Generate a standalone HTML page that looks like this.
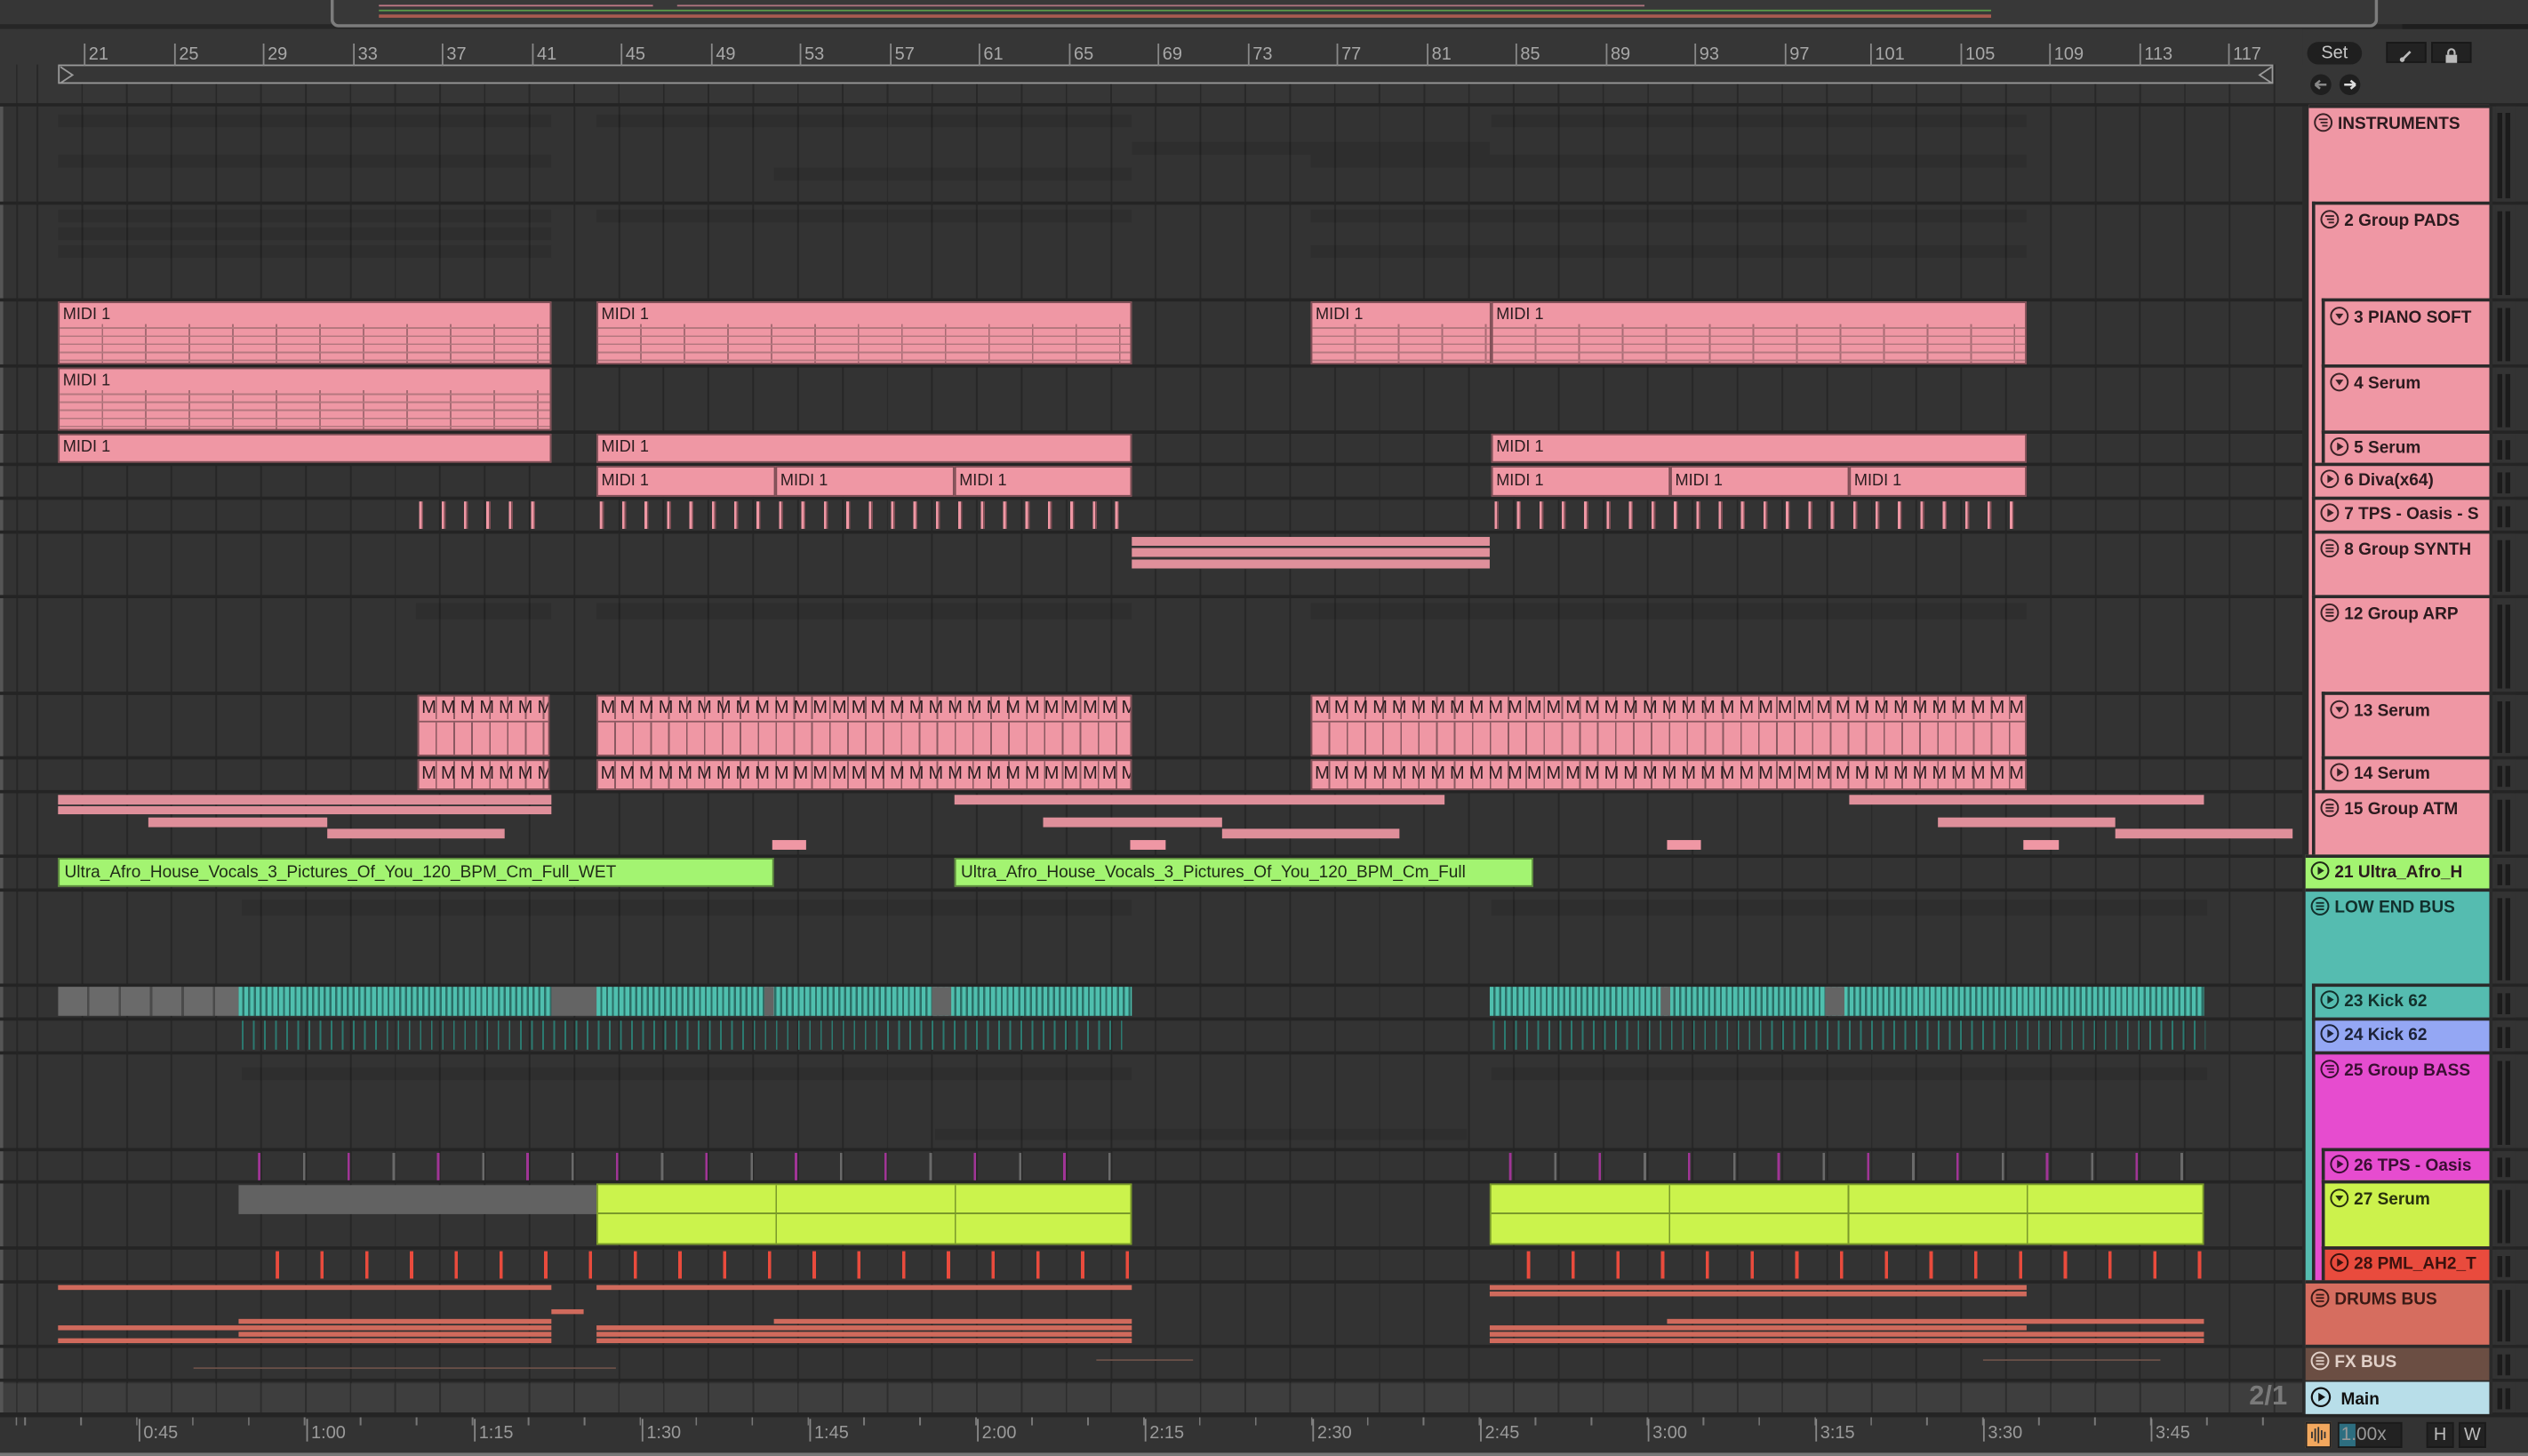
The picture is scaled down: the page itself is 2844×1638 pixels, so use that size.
<!DOCTYPE html>
<html><head><meta charset="utf-8"><style>
html,body{margin:0;padding:0;background:#363636;overflow:hidden;width:2844px;height:1638px}
#s{position:absolute;left:0;top:0;width:1568px;height:903px;transform:scale(1.81378,1.81395);transform-origin:0 0;background:#363636;font-family:"Liberation Sans",sans-serif;overflow:hidden}
.a{position:absolute;box-sizing:border-box}
.sep{position:absolute;left:0;width:1568px;height:2px;background:#242424}
.mc{position:absolute;box-sizing:border-box;background:#ef97a4;border:1px solid #7d4e55;font-size:10px;line-height:12px;color:#2a1c1f;padding-left:2px;overflow:hidden;white-space:nowrap}
.notes{position:absolute;left:0;right:0;top:13px;bottom:0;background:repeating-linear-gradient(180deg,transparent 0 2px,#b5787f 2px 3px,transparent 3px 5px),repeating-linear-gradient(90deg,transparent 0 26px,#a86b74 26px 27px)}
.gh{position:absolute;background:rgba(0,0,0,0.09)}
.h{position:absolute;box-sizing:border-box;border-top:2px solid #2a2a2a;font-weight:bold;font-size:10.5px;color:#2b1a1e;white-space:nowrap;overflow:hidden;padding:3px 0 0 3px;right:24px}
.h.l{border-left:2px solid #2a2a2a}
.h svg{vertical-align:-2px;margin-right:3px}
.m{position:absolute;left:1548px;width:12px;box-sizing:border-box;background:#333}
.m:before,.m:after{content:"";position:absolute;top:4px;bottom:2px;width:3px;background:#1b1b1b}
.m:before{left:1px}.m:after{left:6px}
.rn{position:absolute;top:27px;font-size:11px;color:#a8a8a8;border-left:1px solid #888;padding-left:2px;height:14px;line-height:14px}
.tl{position:absolute;top:880px;font-size:11px;color:#9a9a9a;border-left:1px solid #888;padding-left:2px;height:14px;line-height:18px}
.M{position:absolute;box-sizing:border-box;background:#ef97a4;border:1px solid #7d4e55;overflow:hidden}
.M .t{position:absolute;left:0;right:0;top:0;height:14px;font-size:11px;line-height:14px;color:#2a1c1f;letter-spacing:2.8px;padding-left:1.5px;white-space:nowrap;background:repeating-linear-gradient(90deg,transparent 0 10.1px,#8a5860 10.1px 11.1px)}
.M .b{position:absolute;left:0;right:0;top:15px;bottom:0;border-top:1px solid #8a5860;background:repeating-linear-gradient(90deg,transparent 0 10.1px,#8a5860 10.1px 11.1px)}
</style></head><body><div id="s">

<div class="a" style="left:0;top:0;width:1568px;height:17px;background:#363636"></div>
<div class="a" style="left:0;top:15px;width:1568px;height:3px;background:#262626"></div>
<div class="a" style="left:205px;top:0;width:1270px;height:17px;border:2px solid #7c7c7c;border-top:none;border-radius:0 0 5px 5px;background:#383838"></div>
<div class="a" style="left:235px;top:3px;width:170px;height:1px;background:#c07a86"></div>
<div class="a" style="left:235px;top:6px;width:1000px;height:1px;background:#5a9a4a"></div>
<div class="a" style="left:235px;top:9px;width:1000px;height:2px;background:#a85a50"></div>
<div class="a" style="left:420px;top:3px;width:600px;height:1px;background:#b07580"></div>
<div class="a" style="left:1490px;top:15px;width:78px;height:3px;background:#1e1e1e"></div>

<div class="a" style="left:0;top:18px;width:1428px;height:48px;background:#363636;background-image:repeating-linear-gradient(90deg,#282828 0 1px,transparent 1px 27.75px);background-position:22.7px 0;background-size:100% 100%"></div>
<div class="a" style="left:0;top:18px;width:1428px;height:22px;background:#363636"></div>
<div class="a" style="left:36px;top:40px;width:1374px;height:12px;border:1px solid #9a9a9a;background:#363636"></div>
<svg class="a" style="left:37px;top:41px" width="10" height="11"><path d="M0.5 0.5 L8 5.5 L0.5 10.5" fill="none" stroke="#9a9a9a" stroke-width="1"/></svg>
<svg class="a" style="left:1400px;top:41px" width="10" height="11"><path d="M9 0.5 L1.5 5.5 L9 10.5" fill="none" stroke="#9a9a9a" stroke-width="1"/></svg>
<div class="rn" style="left:52px">21</div><div class="rn" style="left:108px">25</div><div class="rn" style="left:163px">29</div><div class="rn" style="left:219px">33</div><div class="rn" style="left:274px">37</div><div class="rn" style="left:330px">41</div><div class="rn" style="left:385px">45</div><div class="rn" style="left:441px">49</div><div class="rn" style="left:496px">53</div><div class="rn" style="left:552px">57</div><div class="rn" style="left:607px">61</div><div class="rn" style="left:663px">65</div><div class="rn" style="left:718px">69</div><div class="rn" style="left:774px">73</div><div class="rn" style="left:829px">77</div><div class="rn" style="left:885px">81</div><div class="rn" style="left:940px">85</div><div class="rn" style="left:996px">89</div><div class="rn" style="left:1051px">93</div><div class="rn" style="left:1107px">97</div><div class="rn" style="left:1160px">101</div><div class="rn" style="left:1216px">105</div><div class="rn" style="left:1271px">109</div><div class="rn" style="left:1327px">113</div><div class="rn" style="left:1382px">117</div>

<div class="a" style="left:1431px;top:26px;width:34px;height:14px;border-radius:7px;background:#1f1f1f;color:#c8c8c8;font-size:11px;text-align:center;line-height:14px">Set</div>
<div class="a" style="left:1480px;top:26px;width:25px;height:13px;background:#222;border:1px solid #181818"><svg width="23" height="11"><path d="M9 8 L14 3" stroke="#bbb" stroke-width="1.5"/><circle cx="9" cy="8" r="1.5" fill="#bbb"/></svg></div>
<div class="a" style="left:1508px;top:26px;width:25px;height:13px;background:#222;border:1px solid #181818"><svg width="23" height="11"><rect x="8" y="5" width="7" height="5" fill="#bbb"/><path d="M9.5 5 V3.5 a2 2 0 0 1 4 0 V5" fill="none" stroke="#bbb" stroke-width="1.2"/></svg></div>
<div class="a" style="left:1433px;top:46px;width:13px;height:13px;border-radius:50%;background:#1f1f1f"><svg width="13" height="13"><path d="M3 6.5 H10 M3 6.5 L6 4 M3 6.5 L6 9" stroke="#888" stroke-width="1.4" fill="none"/></svg></div>
<div class="a" style="left:1451px;top:46px;width:13px;height:13px;border-radius:50%;background:#1f1f1f"><svg width="13" height="13"><path d="M3 6.5 H10 M10 6.5 L7 4 M10 6.5 L7 9" stroke="#ddd" stroke-width="1.4" fill="none"/></svg></div>

<div class="a" style="left:0;top:66px;width:1428px;height:811px;background:#333;background-image:repeating-linear-gradient(90deg,#262626 0 1px,transparent 1px 27.75px);background-position:22.7px 0"></div>
<div class="a" style="left:0;top:858px;width:1428px;height:19px;background:#3e3e3e;background-image:repeating-linear-gradient(90deg,#2d2d2d 0 1px,transparent 1px 27.75px);background-position:22.7px 0"></div>
<div class="a" style="left:1428px;top:66px;width:140px;height:811px;background:#333"></div>
<div class="a" style="left:0;top:66px;width:2px;height:837px;background:#555"></div>

<div class="gh" style="left:36px;top:71px;width:306px;height:8px"></div>
<div class="gh" style="left:36px;top:96px;width:306px;height:8px"></div>
<div class="gh" style="left:370px;top:71px;width:332px;height:8px"></div>
<div class="gh" style="left:702px;top:88px;width:222px;height:8px"></div>
<div class="gh" style="left:925px;top:71px;width:332px;height:8px"></div>
<div class="gh" style="left:480px;top:104px;width:222px;height:8px"></div>
<div class="gh" style="left:813px;top:96px;width:444px;height:8px"></div>
<div class="gh" style="left:36px;top:130px;width:306px;height:8px"></div>
<div class="gh" style="left:36px;top:141px;width:306px;height:8px"></div>
<div class="gh" style="left:36px;top:152px;width:306px;height:8px"></div>
<div class="gh" style="left:370px;top:130px;width:332px;height:8px"></div>
<div class="gh" style="left:813px;top:130px;width:444px;height:8px"></div>
<div class="gh" style="left:813px;top:152px;width:444px;height:8px"></div>
<div class="gh" style="left:258px;top:374px;width:84px;height:10px"></div>
<div class="gh" style="left:370px;top:374px;width:332px;height:10px"></div>
<div class="gh" style="left:813px;top:374px;width:444px;height:10px"></div>
<div class="gh" style="left:150px;top:558px;width:552px;height:10px"></div>
<div class="gh" style="left:925px;top:558px;width:444px;height:10px"></div>
<div class="gh" style="left:150px;top:662px;width:552px;height:8px"></div>
<div class="gh" style="left:925px;top:662px;width:444px;height:8px"></div>
<div class="gh" style="left:580px;top:700px;width:330px;height:7px"></div>

<div class="sep" style="top:64px"></div><div class="sep" style="top:125px"></div><div class="sep" style="top:185px"></div><div class="sep" style="top:226px"></div><div class="sep" style="top:267px"></div><div class="sep" style="top:287px"></div><div class="sep" style="top:308px"></div><div class="sep" style="top:329px"></div><div class="sep" style="top:369px"></div><div class="sep" style="top:429px"></div><div class="sep" style="top:469px"></div><div class="sep" style="top:490px"></div><div class="sep" style="top:530px"></div><div class="sep" style="top:551px"></div><div class="sep" style="top:610px"></div><div class="sep" style="top:631px"></div><div class="sep" style="top:652px"></div><div class="sep" style="top:712px"></div><div class="sep" style="top:732px"></div><div class="sep" style="top:773px"></div><div class="sep" style="top:794px"></div><div class="sep" style="top:834px"></div><div class="sep" style="top:855px"></div><div class="sep" style="top:876px;height:3px"></div>

<div class="mc" style="left:36px;top:187px;width:306px;height:39px;padding-top:2px">MIDI 1<div class="notes"></div></div>
<div class="mc" style="left:370px;top:187px;width:332px;height:39px;padding-top:2px">MIDI 1<div class="notes"></div></div>
<div class="mc" style="left:813px;top:187px;width:112px;height:39px;padding-top:2px">MIDI 1<div class="notes"></div></div>
<div class="mc" style="left:925px;top:187px;width:332px;height:39px;padding-top:2px">MIDI 1<div class="notes"></div></div>
<div class="mc" style="left:36px;top:228px;width:306px;height:39px;padding-top:2px">MIDI 1<div class="notes"></div></div>
<div class="mc" style="left:36px;top:269px;width:306px;height:18px;line-height:16px">MIDI 1</div>
<div class="mc" style="left:370px;top:269px;width:332px;height:18px;line-height:16px">MIDI 1</div>
<div class="mc" style="left:925px;top:269px;width:332px;height:18px;line-height:16px">MIDI 1</div>
<div class="mc" style="left:370px;top:289px;width:111px;height:19px;line-height:17px">MIDI 1</div>
<div class="mc" style="left:481px;top:289px;width:111px;height:19px;line-height:17px">MIDI 1</div>
<div class="mc" style="left:592px;top:289px;width:110px;height:19px;line-height:17px">MIDI 1</div>
<div class="mc" style="left:925px;top:289px;width:111px;height:19px;line-height:17px">MIDI 1</div>
<div class="mc" style="left:1036px;top:289px;width:111px;height:19px;line-height:17px">MIDI 1</div>
<div class="mc" style="left:1147px;top:289px;width:110px;height:19px;line-height:17px">MIDI 1</div>
<div class="a" style="left:260px;top:311px;width:74px;height:17px;background:repeating-linear-gradient(90deg,#ef97a4 0 1.5px,#7d4e55 1.5px 2.5px,transparent 2.5px 13.9px)"></div>
<div class="a" style="left:372px;top:311px;width:322px;height:17px;background:repeating-linear-gradient(90deg,#ef97a4 0 1.5px,#7d4e55 1.5px 2.5px,transparent 2.5px 13.9px)"></div>
<div class="a" style="left:927px;top:311px;width:322px;height:17px;background:repeating-linear-gradient(90deg,#ef97a4 0 1.5px,#7d4e55 1.5px 2.5px,transparent 2.5px 13.9px)"></div>
<div class="a" style="left:702px;top:333px;width:222px;height:20px;background:repeating-linear-gradient(180deg,#e0909b 0 5.5px,#333 5.5px 7px)"></div>

<div class="M" style="left:259px;top:431px;width:82px;height:38px"><div class="t">MMMMMMMM</div><div class="b"></div></div>
<div class="M" style="left:370px;top:431px;width:332px;height:38px"><div class="t">MMMMMMMMMMMMMMMMMMMMMMMMMMMMMM</div><div class="b"></div></div>
<div class="M" style="left:813px;top:431px;width:444px;height:38px"><div class="t">MMMMMMMMMMMMMMMMMMMMMMMMMMMMMMMMMMMMMMMM</div><div class="b"></div></div>
<div class="M" style="left:259px;top:471px;width:82px;height:19px"><div class="t" style="height:17px;line-height:17px">MMMMMMMM</div></div>
<div class="M" style="left:370px;top:471px;width:332px;height:19px"><div class="t" style="height:17px;line-height:17px">MMMMMMMMMMMMMMMMMMMMMMMMMMMMMM</div></div>
<div class="M" style="left:813px;top:471px;width:444px;height:19px"><div class="t" style="height:17px;line-height:17px">MMMMMMMMMMMMMMMMMMMMMMMMMMMMMMMMMMMMMMMM</div></div>

<div class="a" style="left:36px;top:493px;width:306px;height:6px;background:#df8f9a"></div>
<div class="a" style="left:36px;top:500px;width:306px;height:5px;background:#df8f9a"></div>
<div class="a" style="left:592px;top:493px;width:304px;height:6px;background:#df8f9a"></div>
<div class="a" style="left:1147px;top:493px;width:220px;height:6px;background:#df8f9a"></div>
<div class="a" style="left:92px;top:507px;width:111px;height:6px;background:#df8f9a"></div>
<div class="a" style="left:647px;top:507px;width:111px;height:6px;background:#df8f9a"></div>
<div class="a" style="left:1202px;top:507px;width:110px;height:6px;background:#df8f9a"></div>
<div class="a" style="left:203px;top:514px;width:110px;height:6px;background:#df8f9a"></div>
<div class="a" style="left:758px;top:514px;width:110px;height:6px;background:#df8f9a"></div>
<div class="a" style="left:1312px;top:514px;width:110px;height:6px;background:#df8f9a"></div>
<div class="a" style="left:479px;top:521px;width:21px;height:6px;background:#ef97a4"></div>
<div class="a" style="left:701px;top:521px;width:22px;height:6px;background:#ef97a4"></div>
<div class="a" style="left:1034px;top:521px;width:21px;height:6px;background:#ef97a4"></div>
<div class="a" style="left:1255px;top:521px;width:22px;height:6px;background:#ef97a4"></div>

<div class="a" style="left:36px;top:532px;width:444px;height:18px;background:#a3f471;border:1px solid #5d8a3e;font-size:10.5px;line-height:16px;padding-left:3px;color:#1f2a17;white-space:nowrap;overflow:hidden">Ultra_Afro_House_Vocals_3_Pictures_Of_You_120_BPM_Cm_Full_WET</div>
<div class="a" style="left:592px;top:532px;width:359px;height:18px;background:#a3f471;border:1px solid #5d8a3e;font-size:10.5px;line-height:16px;padding-left:3px;color:#1f2a17;white-space:nowrap;overflow:hidden">Ultra_Afro_House_Vocals_3_Pictures_Of_You_120_BPM_Cm_Full</div>

<div class="a" style="left:36px;top:612px;width:112px;height:18px;background:repeating-linear-gradient(90deg,#6a6a6a 0 18px,#4a4a4a 18px 19.5px)"></div>
<div class="a" style="left:148px;top:612px;width:194px;height:18px;background:repeating-linear-gradient(90deg,#4fbfae 0 2.3px,#2c6e66 2.3px 3.6px)"></div>
<div class="a" style="left:342px;top:612px;width:28px;height:18px;background:#646464"></div>
<div class="a" style="left:370px;top:612px;width:332px;height:18px;background:repeating-linear-gradient(90deg,#4fbfae 0 2.3px,#2c6e66 2.3px 3.6px)"></div>
<div class="a" style="left:474px;top:612px;width:6px;height:18px;background:#646464"></div>
<div class="a" style="left:578px;top:612px;width:12px;height:18px;background:#646464"></div>
<div class="a" style="left:924px;top:612px;width:443px;height:18px;background:repeating-linear-gradient(90deg,#4fbfae 0 2.3px,#2c6e66 2.3px 3.6px)"></div>
<div class="a" style="left:1030px;top:612px;width:6px;height:18px;background:#646464"></div>
<div class="a" style="left:1132px;top:612px;width:12px;height:18px;background:#646464"></div>
<div class="a" style="left:150px;top:633px;width:552px;height:18px;background:repeating-linear-gradient(90deg,#2c7a70 0 1px,transparent 1px 6.9px)"></div>
<div class="a" style="left:926px;top:633px;width:442px;height:18px;background:repeating-linear-gradient(90deg,#2c7a70 0 1px,transparent 1px 6.9px)"></div>
<div class="a" style="left:160px;top:715px;width:542px;height:17px;background:repeating-linear-gradient(90deg,#a03596 0 1.5px,transparent 1.5px 55.5px)"></div>
<div class="a" style="left:936px;top:715px;width:420px;height:17px;background:repeating-linear-gradient(90deg,#a03596 0 1.5px,transparent 1.5px 55.5px)"></div>
<div class="a" style="left:187.7px;top:715px;width:514px;height:17px;background:repeating-linear-gradient(90deg,#6a6a6a 0 1.5px,transparent 1.5px 55.5px)"></div>
<div class="a" style="left:963.7px;top:715px;width:400px;height:17px;background:repeating-linear-gradient(90deg,#6a6a6a 0 1.5px,transparent 1.5px 55.5px)"></div>
<div class="a" style="left:148px;top:735px;width:222px;height:18px;background:#626262"></div>
<div class="a" style="left:370px;top:734px;width:332px;height:38px;background:#cbf34c;border:1px solid #7a9a2a;background-image:linear-gradient(180deg,transparent 0 17px,#7a9a2a 17px 18px,transparent 18px),repeating-linear-gradient(90deg,transparent 0 110px,#7a9a2a 110px 111px)"></div>
<div class="a" style="left:924px;top:734px;width:443px;height:38px;background:#cbf34c;border:1px solid #7a9a2a;background-image:linear-gradient(180deg,transparent 0 17px,#7a9a2a 17px 18px,transparent 18px),repeating-linear-gradient(90deg,transparent 0 110px,#7a9a2a 110px 111px)"></div>
<div class="a" style="left:171px;top:776px;width:532px;height:17px;background:repeating-linear-gradient(90deg,#e94b3d 0 2px,transparent 2px 27.75px)"></div>
<div class="a" style="left:947px;top:776px;width:420px;height:17px;background:repeating-linear-gradient(90deg,#e94b3d 0 2px,transparent 2px 27.75px)"></div>
<div class="a" style="left:36px;top:797px;width:306px;height:3px;background:#d06a5c"></div>
<div class="a" style="left:370px;top:797px;width:332px;height:3px;background:#d06a5c"></div>
<div class="a" style="left:924px;top:797px;width:333px;height:3px;background:#d06a5c"></div>
<div class="a" style="left:924px;top:801px;width:333px;height:3px;background:#d06a5c"></div>
<div class="a" style="left:148px;top:818px;width:194px;height:3px;background:#d06a5c"></div>
<div class="a" style="left:480px;top:818px;width:222px;height:3px;background:#d06a5c"></div>
<div class="a" style="left:1034px;top:818px;width:333px;height:3px;background:#d06a5c"></div>
<div class="a" style="left:36px;top:822px;width:306px;height:3px;background:#d06a5c"></div>
<div class="a" style="left:370px;top:822px;width:332px;height:3px;background:#d06a5c"></div>
<div class="a" style="left:924px;top:822px;width:333px;height:3px;background:#d06a5c"></div>
<div class="a" style="left:148px;top:826px;width:194px;height:3px;background:#d06a5c"></div>
<div class="a" style="left:370px;top:826px;width:332px;height:3px;background:#d06a5c"></div>
<div class="a" style="left:924px;top:826px;width:443px;height:3px;background:#d06a5c"></div>
<div class="a" style="left:36px;top:830px;width:306px;height:3px;background:#d06a5c"></div>
<div class="a" style="left:370px;top:830px;width:332px;height:3px;background:#d06a5c"></div>
<div class="a" style="left:924px;top:830px;width:443px;height:3px;background:#d06a5c"></div>
<div class="a" style="left:342px;top:812px;width:20px;height:3px;background:#d06a5c"></div>
<div class="a" style="left:120px;top:848px;width:262px;height:1px;background:#6a5048"></div>
<div class="a" style="left:680px;top:843px;width:60px;height:1px;background:#6a5048"></div>
<div class="a" style="left:1230px;top:843px;width:110px;height:1px;background:#6a5048"></div>
<div class="a" style="left:1395px;top:856px;font-size:17px;font-weight:bold;color:#7a7a7a;line-height:20px">2/1</div>

<div class="a" style="left:1428px;top:66px;width:118px;height:811px;background:#2a2a2a"></div>
<div class="h" style="left:1432px;top:65px;height:467px;right:24px;background:#ef97a4;width:112px"><svg width="12" height="12"><circle cx="6" cy="6" r="5.2" fill="none" stroke="#3a2226" stroke-width="1.1"/><path d="M3.3 4 H8.7 M4.3 6 H8.7 M5.3 8 H8.7" stroke="#3a2226" stroke-width="1"/></svg>INSTRUMENTS</div>
<div class="h l" style="left:1434px;top:125px;height:164px;width:110px;background:#ef97a4"><svg width="12" height="12"><circle cx="6" cy="6" r="5.2" fill="none" stroke="#3a2226" stroke-width="1.1"/><path d="M3.3 4 H8.7 M4.3 6 H8.7 M5.3 8 H8.7" stroke="#3a2226" stroke-width="1"/></svg>2 Group PADS</div>
<div class="h l" style="left:1440px;top:185px;height:42px;width:104px;background:#ef97a4"><svg width="12" height="12"><circle cx="6" cy="6" r="5.2" fill="none" stroke="#3a2226" stroke-width="1.1"/><path d="M3.5 4.5 H8.5 L6 8 Z" fill="#3a2226"/></svg>3 PIANO SOFT</div>
<div class="h l" style="left:1440px;top:226px;height:42px;width:104px;background:#ef97a4"><svg width="12" height="12"><circle cx="6" cy="6" r="5.2" fill="none" stroke="#3a2226" stroke-width="1.1"/><path d="M3.5 4.5 H8.5 L6 8 Z" fill="#3a2226"/></svg>4 Serum</div>
<div class="h l" style="left:1440px;top:267px;height:22px;width:104px;background:#ef97a4;padding-top:2px"><svg width="12" height="12"><circle cx="6" cy="6" r="5.2" fill="none" stroke="#3a2226" stroke-width="1.1"/><path d="M4.6 3.4 L8.6 6 L4.6 8.6 Z" fill="#3a2226"/></svg>5 Serum</div>
<div class="h l" style="left:1434px;top:287px;height:22px;width:110px;background:#ef97a4;padding-top:2px"><svg width="12" height="12"><circle cx="6" cy="6" r="5.2" fill="none" stroke="#3a2226" stroke-width="1.1"/><path d="M4.6 3.4 L8.6 6 L4.6 8.6 Z" fill="#3a2226"/></svg>6 Diva(x64)</div>
<div class="h l" style="left:1434px;top:308px;height:22px;width:110px;background:#ef97a4;padding-top:2px"><svg width="12" height="12"><circle cx="6" cy="6" r="5.2" fill="none" stroke="#3a2226" stroke-width="1.1"/><path d="M4.6 3.4 L8.6 6 L4.6 8.6 Z" fill="#3a2226"/></svg>7 TPS - Oasis - S</div>
<div class="h l" style="left:1434px;top:329px;height:41px;width:110px;background:#ef97a4"><svg width="12" height="12"><circle cx="6" cy="6" r="5.2" fill="none" stroke="#3a2226" stroke-width="1.1"/><path d="M3.5 4 H8.5 M3.5 6 H8.5 M3.5 8 H8.5" stroke="#3a2226" stroke-width="1"/></svg>8 Group SYNTH</div>
<div class="h l" style="left:1434px;top:369px;height:122px;width:110px;background:#ef97a4"><svg width="12" height="12"><circle cx="6" cy="6" r="5.2" fill="none" stroke="#3a2226" stroke-width="1.1"/><path d="M3.5 4 H8.5 M3.5 6 H8.5 M3.5 8 H8.5" stroke="#3a2226" stroke-width="1"/></svg>12 Group ARP</div>
<div class="h l" style="left:1440px;top:429px;height:41px;width:104px;background:#ef97a4"><svg width="12" height="12"><circle cx="6" cy="6" r="5.2" fill="none" stroke="#3a2226" stroke-width="1.1"/><path d="M3.5 4.5 H8.5 L6 8 Z" fill="#3a2226"/></svg>13 Serum</div>
<div class="h l" style="left:1440px;top:469px;height:22px;width:104px;background:#ef97a4;padding-top:2px"><svg width="12" height="12"><circle cx="6" cy="6" r="5.2" fill="none" stroke="#3a2226" stroke-width="1.1"/><path d="M4.6 3.4 L8.6 6 L4.6 8.6 Z" fill="#3a2226"/></svg>14 Serum</div>
<div class="h l" style="left:1434px;top:490px;height:41px;width:110px;background:#ef97a4"><svg width="12" height="12"><circle cx="6" cy="6" r="5.2" fill="none" stroke="#3a2226" stroke-width="1.1"/><path d="M3.5 4 H8.5 M3.5 6 H8.5 M3.5 8 H8.5" stroke="#3a2226" stroke-width="1"/></svg>15 Group ATM</div>
<div class="h" style="left:1430px;top:530px;height:22px;width:114px;background:#a3f471;padding-top:2px"><svg width="12" height="12"><circle cx="6" cy="6" r="5.2" fill="none" stroke="#1f2a17" stroke-width="1.1"/><path d="M4.6 3.4 L8.6 6 L4.6 8.6 Z" fill="#1f2a17"/></svg>21 Ultra_Afro_H</div>
<div class="h" style="left:1430px;top:551px;height:244px;width:114px;background:#55bcb0;color:#12302c"><svg width="12" height="12"><circle cx="6" cy="6" r="5.2" fill="none" stroke="#12302c" stroke-width="1.1"/><path d="M3.5 4 H8.5 M3.5 6 H8.5 M3.5 8 H8.5" stroke="#12302c" stroke-width="1"/></svg>LOW END BUS</div>
<div class="h l" style="left:1434px;top:610px;height:22px;width:110px;background:#55bcb0;color:#12302c;padding-top:2px"><svg width="12" height="12"><circle cx="6" cy="6" r="5.2" fill="none" stroke="#12302c" stroke-width="1.1"/><path d="M4.6 3.4 L8.6 6 L4.6 8.6 Z" fill="#12302c"/></svg>23 Kick 62</div>
<div class="h l" style="left:1434px;top:631px;height:22px;width:110px;background:#94a7f4;color:#1c2238;padding-top:2px"><svg width="12" height="12"><circle cx="6" cy="6" r="5.2" fill="none" stroke="#1c2238" stroke-width="1.1"/><path d="M4.6 3.4 L8.6 6 L4.6 8.6 Z" fill="#1c2238"/></svg>24 Kick 62</div>
<div class="h l" style="left:1434px;top:652px;height:143px;width:110px;background:#e64ccf;color:#3a0f33"><svg width="12" height="12"><circle cx="6" cy="6" r="5.2" fill="none" stroke="#3a0f33" stroke-width="1.1"/><path d="M3.3 4 H8.7 M4.3 6 H8.7 M5.3 8 H8.7" stroke="#3a0f33" stroke-width="1"/></svg>25 Group BASS</div>
<div class="h l" style="left:1440px;top:712px;height:21px;width:104px;background:#e64ccf;color:#3a0f33;padding-top:2px"><svg width="12" height="12"><circle cx="6" cy="6" r="5.2" fill="none" stroke="#3a0f33" stroke-width="1.1"/><path d="M4.6 3.4 L8.6 6 L4.6 8.6 Z" fill="#3a0f33"/></svg>26 TPS - Oasis</div>
<div class="h l" style="left:1440px;top:732px;height:42px;width:104px;background:#ccf24c;color:#28300e"><svg width="12" height="12"><circle cx="6" cy="6" r="5.2" fill="none" stroke="#28300e" stroke-width="1.1"/><path d="M3.5 4.5 H8.5 L6 8 Z" fill="#28300e"/></svg>27 Serum</div>
<div class="h l" style="left:1440px;top:773px;height:22px;width:104px;background:#e94b3d;color:#3a120e;padding-top:2px"><svg width="12" height="12"><circle cx="6" cy="6" r="5.2" fill="none" stroke="#3a120e" stroke-width="1.1"/><path d="M4.6 3.4 L8.6 6 L4.6 8.6 Z" fill="#3a120e"/></svg>28 PML_AH2_T</div>
<div class="h" style="left:1430px;top:794px;height:41px;width:114px;background:#d66d5f;color:#3a1a15"><svg width="12" height="12"><circle cx="6" cy="6" r="5.2" fill="none" stroke="#3a1a15" stroke-width="1.1"/><path d="M3.5 4 H8.5 M3.5 6 H8.5 M3.5 8 H8.5" stroke="#3a1a15" stroke-width="1"/></svg>DRUMS BUS</div>
<div class="h" style="left:1430px;top:834px;height:22px;width:114px;background:#6b4e43;color:#e0d0c8;padding-top:2px"><svg width="12" height="12"><circle cx="6" cy="6" r="5.2" fill="none" stroke="#e0d0c8" stroke-width="1.1"/><path d="M3.5 4 H8.5 M3.5 6 H8.5 M3.5 8 H8.5" stroke="#e0d0c8" stroke-width="1"/></svg>FX BUS</div>
<div class="h" style="left:1430px;top:857px;height:20px;width:114px;border-top:none;background:#b8dee9;color:#111;padding-top:3px;font-size:10.5px"><svg width="13" height="13"><circle cx="6.5" cy="6.5" r="5.6" fill="none" stroke="#111" stroke-width="1.2"/><path d="M5 3.8 L9.3 6.5 L5 9.2 Z" fill="#111"/></svg>&nbsp;Main</div>

<div class="m" style="top:66px;height:59px"></div><div class="m" style="top:127px;height:58px"></div><div class="m" style="top:187px;height:39px"></div><div class="m" style="top:228px;height:39px"></div><div class="m" style="top:269px;height:18px"></div><div class="m" style="top:289px;height:19px"></div><div class="m" style="top:310px;height:19px"></div><div class="m" style="top:331px;height:38px"></div><div class="m" style="top:371px;height:58px"></div><div class="m" style="top:431px;height:38px"></div><div class="m" style="top:471px;height:19px"></div><div class="m" style="top:492px;height:38px"></div><div class="m" style="top:532px;height:19px"></div><div class="m" style="top:553px;height:57px"></div><div class="m" style="top:612px;height:19px"></div><div class="m" style="top:633px;height:19px"></div><div class="m" style="top:654px;height:58px"></div><div class="m" style="top:714px;height:18px"></div><div class="m" style="top:734px;height:39px"></div><div class="m" style="top:775px;height:19px"></div><div class="m" style="top:796px;height:38px"></div><div class="m" style="top:836px;height:19px"></div><div class="m" style="top:857px;height:19px"></div>

<div class="a" style="left:0;top:879px;width:1568px;height:24px;background:#333"></div>
<div class="a" style="left:0;top:879px;width:1428px;height:5px;background:repeating-linear-gradient(90deg,#777 0 1px,transparent 1px 34.7px);background-position:15px 0"></div>
<div class="tl" style="left:86px">0:45</div><div class="tl" style="left:190px">1:00</div><div class="tl" style="left:294px">1:15</div><div class="tl" style="left:398px">1:30</div><div class="tl" style="left:502px">1:45</div><div class="tl" style="left:606px">2:00</div><div class="tl" style="left:710px">2:15</div><div class="tl" style="left:814px">2:30</div><div class="tl" style="left:918px">2:45</div><div class="tl" style="left:1022px">3:00</div><div class="tl" style="left:1126px">3:15</div><div class="tl" style="left:1230px">3:30</div><div class="tl" style="left:1334px">3:45</div>
<div class="a" style="left:1430px;top:882px;width:16px;height:16px;background:#f3a85e;border:1px solid #222"><svg width="14" height="14"><path d="M3 5v4M5 3v8M7 2v10M9 4v6M11 5v4" stroke="#333" stroke-width="1"/></svg></div>
<div class="a" style="left:1450px;top:882px;width:40px;height:16px;background:#222;border:1px solid #1a1a1a"></div>
<div class="a" style="left:1451px;top:883px;width:10px;height:14px;background:#2d6e80"></div>
<div class="a" style="left:1452px;top:882px;font-size:11.5px;color:#999;line-height:16px">1.00x</div>
<div class="a" style="left:1505px;top:882px;width:17px;height:16px;background:#222;border:1px solid #1a1a1a;color:#bbb;font-size:11px;text-align:center;line-height:15px">H</div>
<div class="a" style="left:1525px;top:882px;width:17px;height:16px;background:#222;border:1px solid #1a1a1a;color:#bbb;font-size:11px;text-align:center;line-height:15px">W</div>
<div class="a" style="left:0;top:901px;width:1568px;height:2px;background:#777"></div>
</div></body></html>
